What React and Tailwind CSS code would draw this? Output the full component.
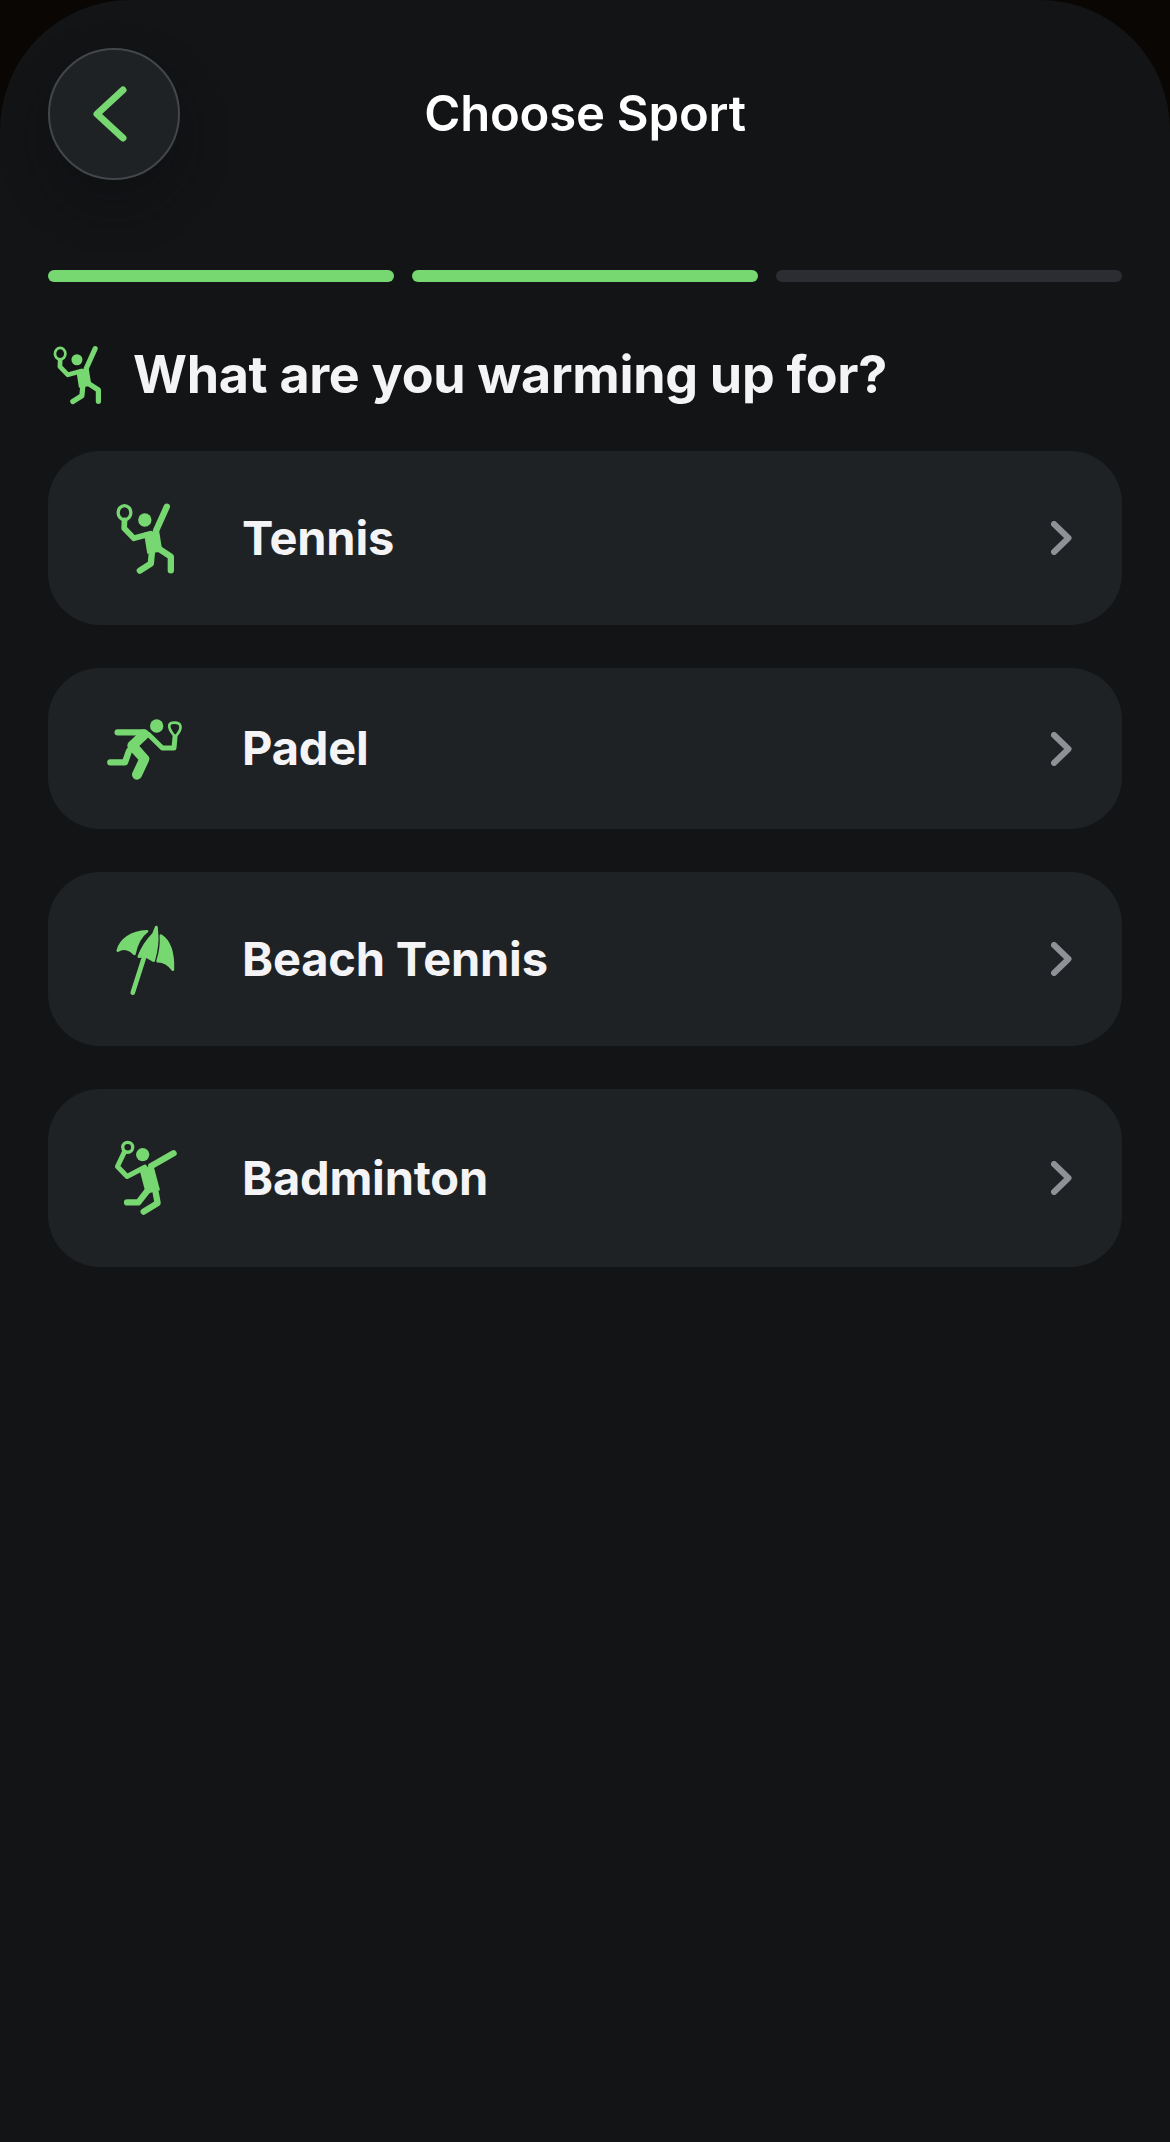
import React from 'react';

const GREEN = '#77d872';

// icon paths are in zoom units: 3 units = 1 pixel of the screenshot
const TennisIcon = ({ className }) => (
    <svg viewBox="70 30 200 225" className={className} fill="none" stroke={GREEN} strokeLinecap="round" strokeLinejoin="round">
        <ellipse cx="107" cy="65" rx="19" ry="21" strokeWidth="10" />
        <path d="M107 88 L106 112 L135 142 L185 128" strokeWidth="17" />
        <path d="M202 118 L234 47" strokeWidth="19" />
        <circle cx="168" cy="87" r="20" fill={GREEN} stroke="none" />
        <path d="M188 122 L198 185" strokeWidth="46" strokeLinecap="butt" />
        <path d="M190 175 L186 218 L153 239" strokeWidth="19" />
        <path d="M205 170 L246 197 L246 238" strokeWidth="19" />
    </svg>
);

const PadelIcon = ({ className }) => (
    <svg viewBox="50 45 240 195" className={className} fill="none" stroke={GREEN} strokeLinecap="round" strokeLinejoin="round">
        <path d="M260 108 C248 92 240 82 243 72 C246 62 272 62 276 74 C279 84 270 98 260 108 Z" strokeWidth="8" />
        <path d="M260 108 L257 141 L222 141 L180 100" strokeWidth="15" />
        <circle cx="205" cy="75" r="20" fill={GREEN} stroke="none" />
        <path d="M88 94 L165 94" strokeWidth="19" />
        <path d="M168 100 L132 134 L168 174 L146 221" strokeWidth="30" />
        <path d="M122 150 L110 184 L66 184" strokeWidth="19" />
    </svg>
);

const UmbrellaIcon = ({ className }) => (
    <svg viewBox="70 65 195 220" className={className} fill={GREEN} stroke={GREEN} strokeLinecap="round" strokeLinejoin="round">
        <path d="M84 148 C92 115 125 92 172 90 C152 105 140 130 134 158 C120 142 100 138 84 148 Z" strokeWidth="8" />
        <path d="M200 78 L192 98 C175 115 158 140 148 166 C160 162 178 168 192 178 C198 155 204 125 202 102 Z" strokeWidth="9" />
        <path d="M214 103 C238 118 252 150 250 206 C240 192 222 180 204 180 C212 155 216 130 214 103 Z" strokeWidth="8" />
        <path d="M162 172 L129 275" strokeWidth="14" fill="none" />
    </svg>
);

const BadmintonIcon = ({ className }) => (
    <svg viewBox="70 55 195 235" className={className} fill="none" stroke={GREEN} strokeLinecap="round" strokeLinejoin="round">
        <circle cx="114" cy="80" r="15" strokeWidth="10" />
        <path d="M104 94 L83 138 L112 168 L165 140" strokeWidth="15" />
        <circle cx="159" cy="102" r="20" fill={GREEN} stroke="none" />
        <path d="M185 136 L252 98" strokeWidth="19" />
        <path d="M170 140 L190 215" strokeWidth="44" strokeLinecap="butt" />
        <path d="M178 205 L146 246 L112 246" strokeWidth="19" />
        <path d="M198 215 L204 248 L162 274" strokeWidth="19" />
    </svg>
);

const sports = [
    { name: 'Tennis', Icon: TennisIcon, iconClass: 'w-[67px] h-[75px]', height: 'h-[174px]' },
    { name: 'Padel', Icon: PadelIcon, iconClass: 'w-[80px] h-[65px]', height: 'h-[161px]' },
    { name: 'Beach Tennis', Icon: UmbrellaIcon, iconClass: 'w-[65px] h-[73px]', height: 'h-[174px]' },
    { name: 'Badminton', Icon: BadmintonIcon, iconClass: 'w-[65px] h-[78px]', height: 'h-[178px]' },
];

const SportCard = ({ name, Icon, iconClass, height }) => (
    <div className={`${height} flex items-center rounded-[52px] bg-[#1f2225] pr-[50px]`}>
        <div className="flex w-[194px] justify-center">
            <Icon className={iconClass} />
        </div>
        <span className="flex-1 text-[47px] font-bold tracking-[-0.2px] text-[#f4f4f6]">{name}</span>
        <svg viewBox="0 0 21 34" className="h-[34px] w-[21px]" fill="none" stroke="#8e9196" strokeWidth="6" strokeLinecap="round" strokeLinejoin="round">
            <path d="M3 3 L17.5 17 L3 31" />
        </svg>
    </div>
);

const App = () => {
    return (
        <div className="h-[2142px] w-[1170px] overflow-hidden bg-[#0a0604] font-['Inter',sans-serif]">
            <div className="h-full rounded-t-[130px] bg-[#131416] px-[48px] pt-[48px]">
                <header className="flex items-center justify-between">
                    <button className="flex h-[132px] w-[132px] items-center justify-center rounded-full border-[2px] border-[#43464a] bg-[#1f2225] shadow-[0_24px_48px_rgba(10,14,16,0.45)]">
                        <svg viewBox="0 0 36 60" className="mr-[8px] h-[60px] w-[36px]" fill="none" stroke={GREEN} strokeWidth="7" strokeLinecap="round" strokeLinejoin="round">
                            <path d="M31 6 L5 30 L31 54" />
                        </svg>
                    </button>
                    <h1 className="text-[49px] font-semibold tracking-[-0.2px] text-white">Choose Sport</h1>
                    <div className="w-[132px]" />
                </header>

                <div className="mt-[90px] grid grid-cols-3 gap-[18px]">
                    <div className="h-[12px] rounded-full bg-[#77d872]" />
                    <div className="h-[12px] rounded-full bg-[#77d872]" />
                    <div className="h-[12px] rounded-full bg-[#2b2d33]" />
                </div>

                <div className="mt-[59px] flex h-[68px] items-center">
                    <div className="flex w-[85px] pl-[2px]">
                        <TennisIcon className="h-[62px] w-[55px]" />
                    </div>
                    <h2 className="text-[52px] font-bold tracking-[-0.3px] text-[#f4f4f6]">What are you warming up for?</h2>
                </div>

                <div className="mt-[42px] flex flex-col gap-[43px]">
                    {sports.map(sport => (
                        <SportCard key={sport.name} {...sport} />
                    ))}
                </div>
            </div>
        </div>
    );
};

export default App;
